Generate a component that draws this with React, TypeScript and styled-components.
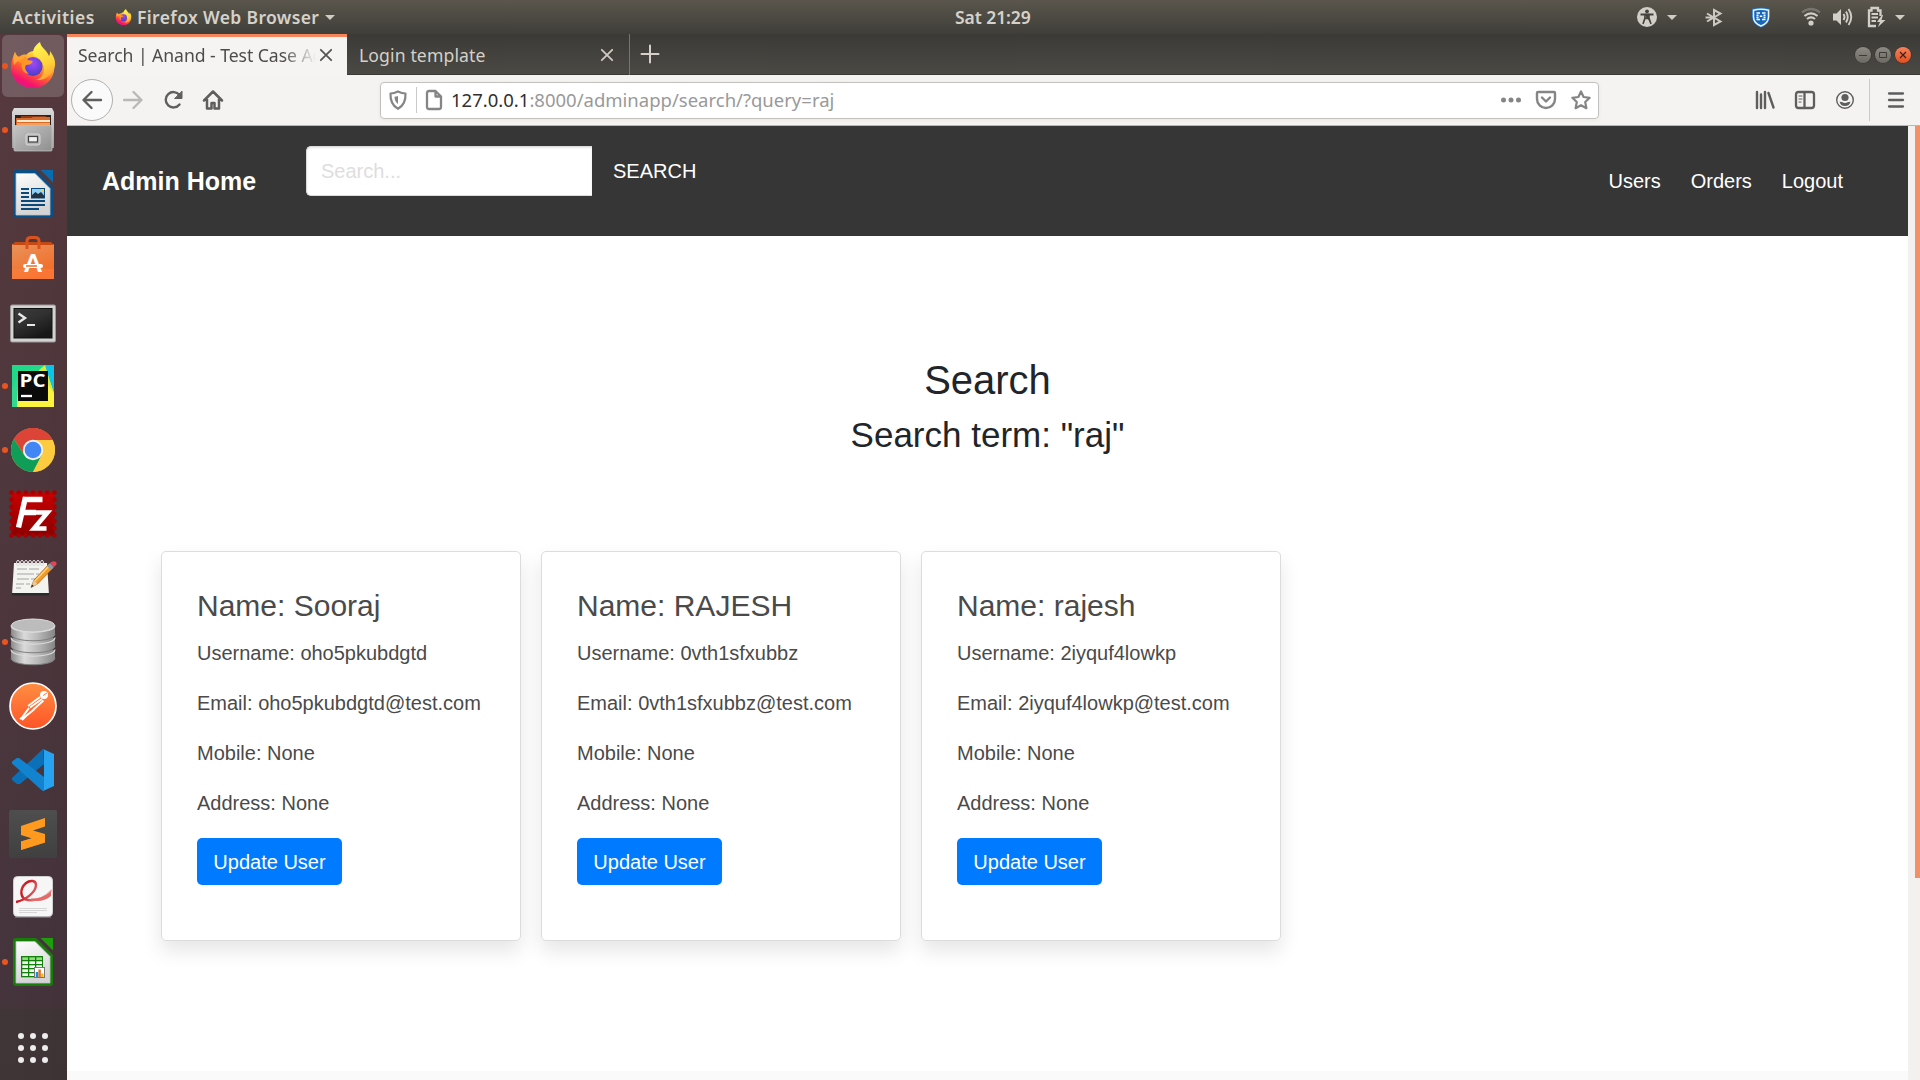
import React from "react";
import styled, { createGlobalStyle, css } from "styled-components";

const UI = `"Noto Sans", "Open Sans", sans-serif`;
const PAGE = `"Liberation Sans", Arial, sans-serif`;

const Global = createGlobalStyle`
  * { box-sizing: border-box; }
  html, body { margin: 0; padding: 0; background: #fff; overflow: hidden; }
  svg { display: block; flex: none; overflow: visible; }
`;

const Desktop = styled.div`
  width: 1920px;
  height: 1080px;
  display: flex;
  flex-direction: column;
  overflow: hidden;
  font-family: ${UI};
`;

/* ---------- system bar ---------- */
const TopBar = styled.header`
  height: 34px;
  flex: none;
  display: grid;
  grid-template-columns: 955px 1fr auto;
  background: linear-gradient(#5a564d, #3f3e39);
  color: #d6d2ca;
  font-weight: 600;
  font-size: 17.5px;
`;
const BarGroup = styled.div`
  display: flex;
  align-items: center;
  white-space: nowrap;
`;
const BarText = styled.span<{ $ml?: number; $ls?: number; $w?: number }>`
  margin-left: ${(p) => p.$ml ?? 0}px;
  letter-spacing: ${(p) => p.$ls ?? 0}px;
  width: ${(p) => (p.$w ? p.$w + "px" : "auto")};
  line-height: 34px;
`;
const Slot = styled.span<{ $ml?: number; $w?: number }>`
  display: flex;
  justify-content: center;
  align-items: center;
  flex: none;
  margin-left: ${(p) => p.$ml ?? 0}px;
  width: ${(p) => p.$w ?? 20}px;
`;

/* ---------- launcher ---------- */
const Workspace = styled.div`
  flex: 1;
  min-height: 0;
  display: flex;
`;
const Launcher = styled.nav`
  width: 67px;
  flex: none;
  display: flex;
  flex-direction: column;
  background: linear-gradient(90deg, rgba(255,255,255,0.01), transparent), linear-gradient(#53373c 0%, #4f363b 30%, #43323a 92.5%, #3f3435 93.5%, #3d3334 100%);
`;
const Item = styled.div<{ $active?: boolean }>`
  height: 64px;
  flex: none;
  display: grid;
  grid-template-columns: 6px 48px;
  column-gap: 1px;
  align-items: center;
  padding: 0 8px 0 0;
  margin: 0 3px 0 2px;
  border: solid transparent;
  border-width: 1px 0;
  border-radius: 6px;
  background-clip: padding-box;
  ${(p) => p.$active && css`background-color: rgba(255, 255, 255, 0.18);`}
`;
const Pip = styled.i<{ $on?: boolean }>`
  width: 6px;
  height: 6px;
  border-radius: 50%;
  background: ${(p) => (p.$on ? "#e95420" : "transparent")};
`;
const AppsButton = styled.div`
  margin: 39px 0 0 18px;
  display: grid;
  grid-template-columns: repeat(3, 6px);
  gap: 6px;
`;
const AppsDot = styled.i`
  width: 6px;
  height: 6px;
  border-radius: 50%;
  background: #eeecec;
`;

/* ---------- browser chrome ---------- */
const Browser = styled.main`
  flex: 1;
  min-width: 0;
  display: flex;
  flex-direction: column;
`;
const TabStrip = styled.div`
  height: 41px;
  flex: none;
  display: flex;
  align-items: stretch;
  background: linear-gradient(#3b3a36, #4a4944);
  border-bottom: 1px solid #3a3935;
`;
const Tab = styled.div<{ $active?: boolean }>`
  width: ${(p) => (p.$active ? 280 : 283)}px;
  height: 41px;
  display: flex;
  align-items: center;
  font-size: 17.6px;
  border-top: ${(p) => (p.$active ? "3px solid #f6845a" : "0")};
  border-right: ${(p) => (p.$active ? "0" : "1px solid #76756f")};
  padding: ${(p) => (p.$active ? "0 15px 2px 11px" : "1px 16px 0 12px")};
  background: ${(p) => (p.$active ? "#f5f4f2" : "transparent")};
  color: ${(p) => (p.$active ? "#4c4c4c" : "#d5d0c8")};
`;
const TabTitle = styled.span<{ $fade?: boolean }>`
  flex: 1;
  min-width: 0;
  white-space: nowrap;
  line-height: 34px;
  letter-spacing: ${(p) => (p.$fade ? -0.05 : 0.12)}px;
  ${(p) => p.$fade && css`mask-image: linear-gradient(90deg, #000 205px, transparent 238px);`}
`;
const WindowButtons = styled.div`
  margin-left: auto;
  display: flex;
  gap: 4px;
  align-items: center;
  padding: 1px 9px 0 0;
`;
const WinBtn = styled.span<{ $close?: boolean }>`
  width: 16px;
  height: 16px;
  border-radius: 50%;
  display: grid;
  place-items: center;
  background: ${(p) => (p.$close ? "linear-gradient(#f5815c, #e2501f)" : "linear-gradient(#8d8a82, #6c6a63)")};
  box-shadow: 0 0 0 0.5px #302f2c;
`;
const Toolbar = styled.div`
  height: 51px;
  flex: none;
  display: flex;
  align-items: center;
  background: #f4f3f1;
  border-bottom: 1px solid #b9b8b5;
  color: #5e5e5d;
`;
const BackCircle = styled.span`
  width: 42px;
  height: 42px;
  margin-left: 4px;
  border: 1px solid #b1b0ae;
  border-radius: 50%;
  background: #fbfafa;
  display: grid;
  place-items: center;
`;
const UrlBar = styled.div`
  width: 1219px;
  height: 37px;
  margin-left: 157px;
  padding-right: 7px;
  border: 1px solid #c3c1bd;
  border-radius: 4px;
  background: #fff;
  display: flex;
  align-items: center;
  color: #858585;
  box-shadow: 0 1px 4px rgba(0, 0, 0, 0.05);
`;
const Rule = styled.i<{ $h: number; $ml: number }>`
  width: 1px;
  height: ${(p) => p.$h}px;
  margin-left: ${(p) => p.$ml}px;
  background: #cbcac8;
`;
const Url = styled.span`
  margin-left: 7px;
  flex: 1;
  font-size: 18.5px;
  line-height: 34px;
  color: #999;
  white-space: nowrap;
`;
const Host = styled.b`
  font-weight: 400;
  color: #303030;
`;

/* ---------- page ---------- */
const Viewport = styled.div`
  flex: 1;
  min-height: 0;
  display: flex;
`;
const Page = styled.div`
  flex: 1;
  display: flex;
  flex-direction: column;
  background: #fff;
  font-family: ${PAGE};
  font-size: 20px;
`;
const Scroll = styled.div`
  width: 12px;
  flex: none;
  display: flex;
  justify-content: flex-end;
  background: #f2f1f0;
`;
const Thumb = styled.i`
  width: 5px;
  height: 752px;
  background: #f29068;
`;
const Navbar = styled.div`
  height: 110px;
  flex: none;
  display: flex;
  align-items: center;
  padding: 0 65px 0 35px;
  background: #363636;
  color: #fff;
`;
const Brand = styled.strong`
  width: 204px;
  font-size: 25px;
  line-height: 30px;
  white-space: nowrap;
`;
const SearchForm = styled.div`
  display: flex;
  align-self: flex-start;
  align-items: center;
  margin-top: 20px;
`;
const SearchInput = styled.input`
  width: 286px;
  height: 50px;
  padding: 0 14px;
  border: 1px solid #dbdbdb;
  border-right: 0;
  border-radius: 5px 0 0 5px;
  background: #fff;
  box-shadow: inset 0 1px 2px rgba(10, 10, 10, 0.1);
  font: 20px ${PAGE};
  &::placeholder { color: #dedede; opacity: 1; }
`;
const SearchButton = styled.span`
  margin-left: 21px;
  line-height: 30px;
`;
const Links = styled.div`
  margin-left: auto;
  display: flex;
  gap: 30px;
  line-height: 30px;
`;
const Hero = styled.section`
  padding-top: 120px;
  height: 315px;
  flex: none;
  text-align: center;
  color: #212529;
`;
const Title = styled.h2`
  margin: 0 0 10px;
  font-size: 40px;
  font-weight: 400;
  line-height: 48px;
`;
const Subtitle = styled.h3`
  margin: 0;
  font-size: 35px;
  font-weight: 400;
  line-height: 42px;
`;
const Cards = styled.section`
  display: flex;
  gap: 20px;
  padding-left: 94px;
`;
const Card = styled.article`
  width: 360px;
  height: 390px;
  padding: 36px 35px 0;
  display: flex;
  flex-direction: column;
  align-items: flex-start;
  border: 1px solid #dcdcdc;
  border-radius: 5px;
  color: #4a4a4a;
  box-shadow: 0 10px 20px rgba(0, 0, 0, 0.1);
`;
const Name = styled.h4`
  margin: 0 0 14px;
  font-size: 30px;
  font-weight: 400;
  line-height: 36px;
`;
const Field = styled.p`
  margin: 0 0 20px;
  line-height: 30px;
  white-space: nowrap;
`;
const Update = styled.button`
  width: 145px;
  height: 47px;
  padding: 2px 0 0;
  border: 0;
  border-radius: 5px;
  background: #007bff;
  color: #fff;
  font: 20px ${PAGE};
`;
const Footer = styled.footer`
  margin-top: auto;
  height: 9px;
  background: #fafafa;
`;

/* ---------- icons ---------- */
const Firefox = ({ size = 48, id }: { size?: number; id: string }) => (
  <svg width={size} height={size} viewBox="0 1 48 48">
    <defs>
      <linearGradient id={id + "a"} x1=".8" y1=".05" x2=".25" y2=".95">
        <stop offset="0" stopColor="#fff44f" /><stop offset=".3" stopColor="#ffb02e" />
        <stop offset=".58" stopColor="#ff5a36" /><stop offset=".85" stopColor="#f5156c" /><stop offset="1" stopColor="#e31587" />
      </linearGradient>
      <radialGradient id={id + "b"} cx=".5" cy=".35" r=".65">
        <stop offset="0" stopColor="#a04bf0" /><stop offset=".5" stopColor="#7542e5" /><stop offset="1" stopColor="#4a3fc0" />
      </radialGradient>
      <linearGradient id={id + "c"} x1=".4" y1="0" x2=".7" y2="1">
        <stop offset="0" stopColor="#fff44f" /><stop offset=".6" stopColor="#ffd23c" /><stop offset="1" stopColor="#ff9a2e" />
      </linearGradient>
    </defs>
    <path d="M6 11C7 14 8 15 10 16C12 14 15 13 17 14C21 9 27 9 32 12L43 18C50 31 40 47 24 47C11 47 2 38 2 26C2 20 4 16 6 11Z" fill={`url(#${id}a)`} />
    <path d="M31 1C24 6 23 11 25 15C31 17 35 22 35 28C35 34 31 38 27 39C37 40 44 33 46 25C47 18 43 13 41 10C41 12 41 14 40 15C38 9 32 7 31 1Z" fill={`url(#${id}c)`} />
    <circle cx="24" cy="25.500" r="9.600" fill={`url(#${id}b)`} />
    <path d="M7 18C11 14 16 14 19 19L24 20C23 23 20 24 17 24C15 27 17 30 20 33C13 32 12 26 13 22C10 21 8 20 7 18Z" fill="#ff9522" />
    <path d="M6 11C7 14 8 15 10 16L17 13.500C15 15 15 17 14 18C11 18 8 20 5 24C4 19 4 15 6 11Z" fill="#ffa436" />
  </svg>
);

const Big = ({ children, top = 0 }: { children: React.ReactNode; top?: number }) => (
  <svg width="48" height="48" viewBox={`0 ${top} 48 48`}>{children}</svg>
);

const Files = () => (
  <Big>
    <defs>
      <linearGradient id="fi1" x2="0" y2="1"><stop stopColor="#dcdcdc" /><stop offset="1" stopColor="#9b9b9b" /></linearGradient>
      <linearGradient id="fi2" x2="1" y2="1"><stop stopColor="#c4c4c4" /><stop offset="1" stopColor="#8f8f8f" /></linearGradient>
    </defs>
    <path d="M5 2H43L45 6V42H3V6Z" fill="url(#fi1)" />
    <rect x="6" y="9" width="36" height="13" fill="#2b2220" />
    <path d="M12 10h25v4H12z" fill="#8d3b14" />
    <path d="M7 12h15l2-1h17v9H7z" fill="#d7692a" />
    <path d="M8 14h33v2H8z" fill="#ffe9c8" /><path d="M8 17h33v2H8z" fill="#f2a05b" />
    <rect x="5" y="19.500" width="38" height="25.500" rx="1" fill="url(#fi2)" stroke="#c9c9c9" strokeWidth=".7" />
    <rect x="17" y="28" width="14" height="11" rx="2" fill="#b5b5b5" stroke="#d8d8d8" />
    <rect x="19.500" y="30.500" width="9" height="5.500" fill="#f1f1f1" stroke="#444" strokeWidth="1.200" />
  </Big>
);

const Doc = ({ edge, fold, id }: { edge: string; fold: string; id: string }) => (
  <>
    <defs>
      <linearGradient id={id} x2=".3" y2="1"><stop stopColor="#fdfdfd" /><stop offset="1" stopColor="#d4d4d4" /></linearGradient>
    </defs>
    <path d="M7 0H27L44 17V45Q44 48 41 48H7Q4 48 4 45V3Q4 0 7 0Z" fill={edge} />
    <path d="M31.500 0H44V12.500Z" fill={fold} />
    <path d="M7 3.500H26L41 18.500V45H7Z" fill={`url(#${id})`} stroke="#b9c2c6" strokeWidth=".8" />
  </>
);
const Writer = () => (
  <Big>
    <Doc edge="#0a4f85" fold="#0a6cb0" id="wr" />
    <path d="M12 19H20M12 23H20M12 27H20M12 31H36M12 35H36M12 39H30" stroke="#0b4a78" strokeWidth="2" />
    <rect x="22.500" y="18.500" width="13" height="9.500" fill="#8fd0f5" stroke="#0b4a78" />
    <path d="M23 28V25L26.500 22L29 24L32 22L35 25.500V28Z" fill="#234" /><circle cx="33.500" cy="20.500" r="1.500" fill="#f7d33c" />
  </Big>
);
const Software = () => (
  <Big>
    <defs><linearGradient id="so" x2=".5" y2="1"><stop stopColor="#e8945c" /><stop offset="1" stopColor="#f36b27" /></linearGradient></defs>
    <path d="M3 10H45V45H3Z" fill="url(#so)" /><path d="M3 11L6 8H42L45 11Z" fill="#c34a13" /><path d="M3 35H45V45H3Z" fill="#ff8040" opacity=".5" />
    <path d="M18 15V7Q18 3.500 22 3.500H26Q30 3.500 30 7V15" fill="none" stroke="#d9531c" strokeWidth="3" />
    <text x="24" y="38" textAnchor="middle" fontFamily="Lato, sans-serif" fontWeight="900" fontSize="25" fill="#fff">A</text>
    <path d="M16 32H32" stroke="#fff" strokeWidth="4" strokeLinecap="round" /><path d="M17 32H28" stroke="#ee6d2d" strokeWidth="1.500" />
  </Big>
);
const Terminal = () => (
  <Big top={-3}>
    <defs>
      <linearGradient id="te" x2=".6" y2="1"><stop stopColor="#3c3c3c" /><stop offset=".5" stopColor="#303030" /><stop offset="1" stopColor="#171717" /></linearGradient>
    </defs>
    <rect x="1.500" y="4" width="45" height="37" rx="1.500" fill="#d2d2d2" stroke="#9a9a9a" />
    <rect x="5" y="7.500" width="38" height="29.500" fill="url(#te)" stroke="#111" />
    <path d="M9.500 12.500L16 17L9.500 21.500" fill="none" stroke="#e8e8e8" strokeWidth="2.400" /><path d="M18 24H26" stroke="#e8e8e8" strokeWidth="2" />
  </Big>
);
const PyCharm = () => (
  <Big>
    <defs><linearGradient id="py" x2="0" y2="1"><stop stopColor="#1edb8b" /><stop offset=".5" stopColor="#34d98c" /><stop offset="1" stopColor="#fcf84a" /></linearGradient></defs>
    <rect x="3" y="3" width="42" height="42" fill="#21d789" />
    <path d="M3 27L12 8L38 5L45 30V45H8Z" fill="url(#py)" /><path d="M3 27L8 18V45H3Z" fill="#2fd98d" /><path d="M34 3H45V31Z" fill="#0cc3ea" />
    <path d="M39 14L45 31V45H8L10 39H39Z" fill="#fcf33f" /><path d="M36 3L45 32L30 8Z" fill="#d9ea3a" />
    <rect x="9" y="9" width="30" height="30" fill="#0a0a0a" />
    <text x="10.500" y="24.800" fontFamily="Open Sans, sans-serif" fontWeight="700" fontSize="18.500" textLength="26" lengthAdjust="spacingAndGlyphs" fill="#fff">PC</text>
    <path d="M12 34H23" stroke="#fff" strokeWidth="2.300" />
  </Big>
);
const Chrome = () => (
  <Big>
    <circle cx="24" cy="24" r="22" fill="#fccb3f" />
    <path d="M24 24L4.950 13A22 22 0 0 1 43.050 13Z" fill="#db4437" /><path d="M24 14H43.600A22 22 0 0 0 4.950 13L15.300 29Z" fill="#db4437" />
    <path d="M4.950 13A22 22 0 0 0 24 46L32.700 29L24 34L15.300 29Z" fill="#109d58" /><path d="M24 14H43.600A22 22 0 0 1 24 46L33 29Z" fill="#fccb3f" />
    <circle cx="24" cy="24" r="10.200" fill="#f1f1f1" /><circle cx="24" cy="24" r="8.300" fill="#4285f4" />
  </Big>
);
const FileZilla = () => (
  <Big>
    <defs><linearGradient id="fz" x2="0" y2="1"><stop stopColor="#c90000" /><stop offset="1" stopColor="#8d0000" /></linearGradient></defs>
    <rect x="2.500" y="2.500" width="43" height="43" fill="url(#fz)" />
    <rect x="2.500" y="2.500" width="43" height="43" fill="none" stroke="#a80000" strokeWidth="4.600" strokeLinecap="round" strokeDasharray="0 7.167" />
    <path d="M15.500 9.500H33.500M14 22.500H27M16.500 7L9.500 37.500" stroke="#fff" strokeWidth="5.400" fill="none" />
    <path d="M24.500 22.500H38.500L25 38.500H37.500" stroke="#fff" strokeWidth="4.600" fill="none" />
  </Big>
);
const Gedit = () => (
  <Big top={-1}>
    <path d="M5 8H38L40 40H3Z" fill="#f3f3ef" /><path d="M3 38H40V40.500H3Z" fill="#2b2b2b" />
    <path d="M8 14H18M20 14H30M8 19H25M27 19H30M8 24H20M22 24H27M7 29H15M17 29H21M7 33H12" stroke="#a5a5a5" strokeWidth="1" />
    {[9, 13, 17, 21, 25, 29, 33].map((x) => <ellipse key={x} cx={x} cy="8" rx="1.500" ry="2.700" fill="none" stroke="#ddd" strokeWidth="1" />)}
    <path d="M22 32.500L25 25L40 9L44 13L28.500 29Z" fill="#f29b2b" stroke="#a05b12" strokeWidth=".7" />
    <path d="M26 26L41 10" stroke="#ffd27a" strokeWidth="1.500" /><path d="M22 32.500L25 25L28.500 29Z" fill="#e9c9a0" /><path d="M22 32.500L23 29.500L24.700 31Z" fill="#222" />
    <path d="M38 11L41 8L45 12L42 15Z" fill="#8c9ba8" /><path d="M41 8Q44 5 47 7Q49 9 45 12Z" fill="#e0455a" />
  </Big>
);
const Database = () => (
  <Big>
    <defs><linearGradient id="db"><stop stopColor="#8b8b8b" /><stop offset=".3" stopColor="#dadada" /><stop offset=".6" stopColor="#bababa" /><stop offset="1" stopColor="#858585" /></linearGradient></defs>
    {[40, 28, 16].map((y) => (
      <g key={y}>
        <path d={`M2 ${y - 8}V${y}C2 ${y + 9} 46 ${y + 9} 46 ${y}V${y - 8}Z`} fill="url(#db)" />
        <path d={`M2 ${y}C2 ${y + 9} 46 ${y + 9} 46 ${y}`} fill="none" stroke="#7f7f7f" strokeWidth="1" />
        <path d={`M2 ${y - 8.5}C2 ${y + 0.5} 46 ${y + 0.5} 46 ${y - 8.5}`} fill="none" stroke="#dcdcdc" strokeWidth="1.100" />
      </g>
    ))}
    <ellipse cx="24" cy="7.500" rx="21.500" ry="6.500" fill="#bcbcbc" stroke="#dedede" />
  </Big>
);
const Postman = () => (
  <Big>
    <defs><linearGradient id="po" x2="0" y2="1"><stop stopColor="#ff8e43" /><stop offset="1" stopColor="#ff5427" /></linearGradient></defs>
    <circle cx="24" cy="24" r="23" fill="url(#po)" stroke="#fff" strokeWidth="1.700" />
    <circle cx="35" cy="13" r="4" fill="#fff" /><path d="M34 13.500L38 11" stroke="#ff7a3c" strokeWidth="1" />
    <path d="M31 15L19 24M33 17L21 25.500M34.500 18.500L24 28" stroke="#fff" strokeWidth="1.700" /><path d="M20 26L13 35.500L11 37M25 27.500L17 34L13 38" stroke="#fff" strokeWidth="2" fill="none" />
  </Big>
);
const VsCode = () => (
  <Big>
    <path d="M34 3L3 32V34L8 38L11 38L35 18Z" fill="#0b70b8" /><path d="M3 15.500L8 12H10L35 31V45L33 44.500L3 17.500Z" fill="#1284cf" />
    <path d="M34 3L45 8V40L34 45Q35 44.500 35 42V6Q35 4 34 3Z" fill="#27a3f2" />
  </Big>
);
const Sublime = () => (
  <Big>
    <defs><linearGradient id="su" x2="0" y2="1"><stop stopColor="#4e4e4e" /><stop offset="1" stopColor="#404040" /></linearGradient></defs>
    <rect width="48" height="48" rx="2" fill="url(#su)" />
    <path d="M12 31.500L24 28L36 24V32.500L12 40Z" fill="#e98205" />
    <path d="M12 31.500L25 27.500L36 32.500L12 40Z" fill="#ff9a1f" />
    <path d="M12 16L36 8V16.500L24 20.500L36 24V32.500L12 25Z" fill="#ff9a1f" />
  </Big>
);
const Evince = () => (
  <Big top={2}>
    <defs><linearGradient id="ev" x2="1" y2=".3"><stop stopColor="#e89a98" /><stop offset=".3" stopColor="#c8151b" /><stop offset="1" stopColor="#efb3b0" /></linearGradient></defs>
    <rect x="4.500" y="4.500" width="39" height="40" rx="4" fill="#f6f6f6" stroke="#d0d0d0" /><path d="M6 45H42" stroke="#999" />
    <path d="M7 30C17 28 27 20 27 13C27 8 21 8 17 11C10 17 11 27 19 28C27 29 36 26 43 18" fill="none" stroke="url(#ev)" strokeWidth="2.400" />
    <path d="M22 26.500C30 27 37 24 42 19V24C36 29 29 30 22 28Z" fill="#e26a68" />
    <path d="M10 36.500H38M10 40.500H28M10 38.500H38" stroke="#d6d6d6" strokeWidth="1" />
  </Big>
);
const Calc = () => (
  <Big>
    <Doc edge="#187c09" fold="#1f9e0c" id="ca" />
    <path d="M12 18H34V39.300H12Z" fill="#117f0a" />
    {[19.3, 23.3, 27.3, 31.3, 35.3].map((y, r) => [13.3, 20.3, 27.3].map((x) => <rect key={x + "-" + y} x={x} y={y} width="5.700" height="2.700" fill={r ? "#f4f8f3" : "#8fdc80"} />))}
    <rect x="25.500" y="29.500" width="10" height="10" fill="#fff" stroke="#777" /><path d="M28 39V34" stroke="#1b8edb" strokeWidth="2.500" /><path d="M30.600 39V31.500" stroke="#e0761e" strokeWidth="2.500" /><path d="M33.300 39V35.500" stroke="#efb52b" strokeWidth="2.500" />
  </Big>
);

const Caret = () => <svg width="10" height="5" viewBox="0 0 10 5"><path d="M0 0H10L5 5Z" fill="#cfccc4" /></svg>;
const Cross = ({ color }: { color: string }) => (
  <svg width="12" height="12" viewBox="0 0 12 12"><path d="M.8.8L11.200 11.200M11.200.8L.8 11.200" stroke={color} strokeWidth="1.800" strokeLinecap="round" /></svg>
);
const Line = ({ d, w = 2.2, color = "currentColor", children }: { d: string; w?: number; color?: string; children?: React.ReactNode }) => (
  <svg width="20" height="20" viewBox="0 0 20 20" fill="none" stroke={color} strokeWidth={w} strokeLinecap="round" strokeLinejoin="round">
    <path d={d} />{children}
  </svg>
);

const LAUNCHER: { icon: React.ReactNode; on?: boolean }[] = [
  { icon: <Firefox id="fxl" />, on: true },
  { icon: <Files />, on: true },
  { icon: <Writer /> },
  { icon: <Software /> },
  { icon: <Terminal /> },
  { icon: <PyCharm />, on: true },
  { icon: <Chrome />, on: true },
  { icon: <FileZilla /> },
  { icon: <Gedit /> },
  { icon: <Database />, on: true },
  { icon: <Postman /> },
  { icon: <VsCode /> },
  { icon: <Sublime /> },
  { icon: <Evince /> },
  { icon: <Calc />, on: true },
];

const USERS = [
  { name: "Sooraj", username: "oho5pkubdgtd" },
  { name: "RAJESH", username: "0vth1sfxubbz" },
  { name: "rajesh", username: "2iyquf4lowkp" },
];

const SystemBar = () => (
  <TopBar>
    <BarGroup>
      <BarText $ml={12} $w={83} $ls={0.48}>Activities</BarText>
      <Slot $ml={19} $w={18}><Firefox size={17} id="fxs" /></Slot>
      <BarText $ml={5} $w={183} $ls={0.36}>Firefox Web Browser</BarText>
      <Slot $ml={5} $w={10}><Caret /></Slot>
    </BarGroup>
    <BarGroup><BarText $ls={-0.08}>Sat 21:29</BarText></BarGroup>
    <BarGroup>
      <Slot>
        <svg width="20" height="20" viewBox="0 0 20 20"><circle cx="10" cy="10" r="10" fill="#d2cfc9" /><circle cx="10" cy="4.300" r="1.900" fill="#45433e" /><path d="M3.500 7.500H16.500M10 7V12" stroke="#45433e" strokeWidth="1.800" /><path d="M8 7.500H12V11L14 17M8 7.500V11L6 17M8 11.500H12" stroke="#45433e" strokeWidth="1.600" fill="#45433e" /></svg>
      </Slot>
      <Slot $ml={10} $w={10}><Caret /></Slot>
      <Slot $ml={28} $w={18}>
        <svg width="18" height="17" viewBox="0 0 18 17"><path d="M2 4.500L15.500 12.500L9 16V1L15.500 4.500L2 12.500M.500 8.500H9" fill="none" stroke="#cbc8c1" strokeWidth="2" /></svg>
      </Slot>
      <Slot $ml={28}>
        <svg width="20" height="21" viewBox="0 0 20 21"><path d="M1 2Q10-.5 19 2V10Q19 17 10 20.500Q1 17 1 10Z" fill="#1b76d0" /><path d="M2.500 3.200Q10 1.200 17.500 3.200V10Q17.500 16 10 19Q2.500 16 2.500 10Z" fill="#1767bb" stroke="#e8f3ff" strokeWidth="1.500" /><path d="M5.500 6H9M11 6H14.500M5.500 12.500H9M11 12.500H14.500M5.500 8.300H7.500M12.500 8.300H14.500M5.500 10.400H7.500M12.500 10.400H14.500M8.700 9.300H11.300" stroke="#fff" strokeWidth="1.600" /></svg>
      </Slot>
      <Slot $ml={30}>
        <svg width="20" height="18" viewBox="0 0 20 18" fill="none" strokeWidth="2.200"><path d="M1 4.500Q10-2.500 19 4.500" stroke="#77746d" /><path d="M3.500 8Q10 2.700 16.500 8M6 11Q10 7.800 14 11" stroke="#d2cfc9" /><circle cx="10" cy="15" r="2.600" fill="#d2cfc9" /></svg>
      </Slot>
      <Slot $ml={12}>
        <svg width="20" height="18" viewBox="0 0 20 18" fill="none" stroke="#d2cfc9" strokeWidth="1.900"><path d="M0 5.500H3.500L8 1V17L3.500 12.500H0Z" fill="#d2cfc9" stroke="none" /><path d="M10.500 6Q12.500 9 10.500 12M13 3.500Q16.500 9 13 14.500M15.500 1Q21 9 15.500 17" /></svg>
      </Slot>
      <Slot $ml={14}>
        <svg width="20" height="20" viewBox="0 0 20 20" fill="none" stroke="#d2cfc9" strokeWidth="2.300"><path d="M9 19H2V3.500H4.500V1H11V3.500H13.500V9" /><path d="M4.500 7H11M4.500 10.500H11M4.500 14H9" strokeWidth="1.900" /><path d="M15 8L10 15H13L11 20L18.500 13H14.500L16 8Z" fill="#d2cfc9" stroke="none" /></svg>
      </Slot>
      <Slot $ml={8} $w={10}><Caret /></Slot>
      <Slot $w={15} />
    </BarGroup>
  </TopBar>
);

const BrowserChrome = () => (
  <>
    <TabStrip>
      <Tab $active>
        <TabTitle $fade>Search | Anand - Test Case Ad</TabTitle>
        <Cross color="#555" />
      </Tab>
      <Tab>
        <TabTitle>Login template</TabTitle>
        <Cross color="#cfcac2" />
      </Tab>
      <Slot $ml={10}><Line d="M10 1.500V18.500M1.500 10H18.500" color="#d5d0c8" w={2} /></Slot>
      <WindowButtons>
        <WinBtn><svg width="8" height="8"><path d="M0 4.500H8" stroke="#3c3b37" /></svg></WinBtn>
        <WinBtn><svg width="8" height="8"><path d="M.5 1.500H7.500V6.500H.5Z" fill="none" stroke="#3c3b37" /></svg></WinBtn>
        <WinBtn $close><svg width="8" height="8"><path d="M1 1L7 7M7 1L1 7" stroke="#3c2119" strokeWidth="1.200" /></svg></WinBtn>
      </WindowButtons>
    </TabStrip>
    <Toolbar>
      <BackCircle><Line d="M19 10H2M9.500 2L1.500 10L9.500 18" w={2.4} /></BackCircle>
      <Slot $ml={10}><Line d="M1 10H18M10.500 2L18.500 10L10.500 18" color="#b9b8b6" w={2.3} /></Slot>
      <Slot $ml={21}><Line d="M15.500 14.500A7.700 7.700 0 1 1 15.500 5" w={2.4}><path d="M18 1.500V8.500H11Z" fill="currentColor" strokeWidth="1" /></Line></Slot>
      <Slot $ml={19}><Line d="M1 10.500L10 1.500L19 10.500M4 9V18.500H8.500V13H11.500V18.500H16V9" w={2.5} /></Slot>
      <UrlBar>
        <Slot $ml={7}><Line d="M10 1.500Q14 3.500 17.500 3.500Q18 14.500 10 18.800Q2 14.500 2.500 3.500Q6 3.500 10 1.500Z" w={2.2}><path d="M10 6V14Q6.500 11.500 6.500 6.800Q8.500 6.700 10 6Z" fill="currentColor" stroke="none" /></Line></Slot>
        <Rule $h={26} $ml={8} />
        <Slot $ml={7}><Line d="M5 1H11.500L17 6.500V17Q17 19 15 19H5Q3 19 3 17V3Q3 1 5 1ZM11.500 1V6.500H17" w={2.3} /></Slot>
        <Url $ml={8}><Host>127.0.0.1</Host>:8000/adminapp/search/?query=raj</Url>
        <Slot>
          <svg width="20" height="6" viewBox="0 0 20 6" fill="currentColor"><circle cx="2.500" cy="3" r="2.500" /><circle cx="10" cy="3" r="2.500" /><circle cx="17.500" cy="3" r="2.500" /></svg>
        </Slot>
        <Slot $ml={15}><Line d="M2 2H18Q19 2 19 3V9A9 9 0 0 1 1 9V3Q1 2 2 2ZM6 7.500L10 11.500L14 7.500" w={2.4} /></Slot>
        <Slot $ml={15}><Line d="M10 1.500L12.600 7L18.700 7.800L14.200 12L15.400 18.200L10 15.200L4.600 18.200L5.800 12L1.300 7.800L7.400 7Z" w={2.2} /></Slot>
      </UrlBar>
      <Slot $ml={156}><Line d="M2 2V18M6 4.500V18M10 2V18M13.500 3L18.500 17.500" w={2.4} /></Slot>
      <Slot $ml={20}><Line d="M3.500 2H16.500Q19 2 19 4.500V15.500Q19 18 16.500 18H3.500Q1 18 1 15.500V4.500Q1 2 3.500 2ZM9.500 2V18" w={2.3}><path d="M4 6H7M4 9H7M4 12H6" strokeWidth="1.200" /></Line></Slot>
      <Slot $ml={20}>
        <svg width="20" height="20" viewBox="0 0 20 20"><circle cx="10" cy="10" r="8.300" fill="none" stroke="currentColor" strokeWidth="1.400" /><circle cx="10" cy="7.500" r="3.600" fill="currentColor" /><path d="M4.500 11.500Q6 12 7 12Q10 14 13 12Q14 12 15.500 11.500Q14.500 16 10 16Q5.500 16 4.500 11.500Z" fill="currentColor" /></svg>
      </Slot>
      <Rule $h={42} $ml={14} />
      <Slot $ml={16}><Line d="M3 3.500H17M3 10H17M3 16.500H17" w={2.3} /></Slot>
    </Toolbar>
  </>
);

export default function App() {
  return (
    <Desktop>
      <Global />
      <SystemBar />
      <Workspace>
        <Launcher>
          {LAUNCHER.map((it, i) => (
            <Item key={i} $active={i === 0}><Pip $on={it.on} />{it.icon}</Item>
          ))}
          <AppsButton>{Array.from({ length: 9 }, (_, i) => <AppsDot key={i} />)}</AppsButton>
        </Launcher>
        <Browser>
          <BrowserChrome />
          <Viewport>
            <Page>
              <Navbar>
                <Brand>Admin Home</Brand>
                <SearchForm>
                  <SearchInput placeholder="Search..." />
                  <SearchButton>SEARCH</SearchButton>
                </SearchForm>
                <Links><span>Users</span><span>Orders</span><span>Logout</span></Links>
              </Navbar>
              <Hero>
                <Title>Search</Title>
                <Subtitle>Search term: "raj"</Subtitle>
              </Hero>
              <Cards>
                {USERS.map((u) => (
                  <Card key={u.username}>
                    <Name>Name: {u.name}</Name>
                    <Field>Username: {u.username}</Field>
                    <Field>Email: {u.username}@test.com</Field>
                    <Field>Mobile: None</Field>
                    <Field>Address: None</Field>
                    <Update>Update User</Update>
                  </Card>
                ))}
              </Cards>
              <Footer />
            </Page>
            <Scroll><Thumb /></Scroll>
          </Viewport>
        </Browser>
      </Workspace>
    </Desktop>
  );
}
